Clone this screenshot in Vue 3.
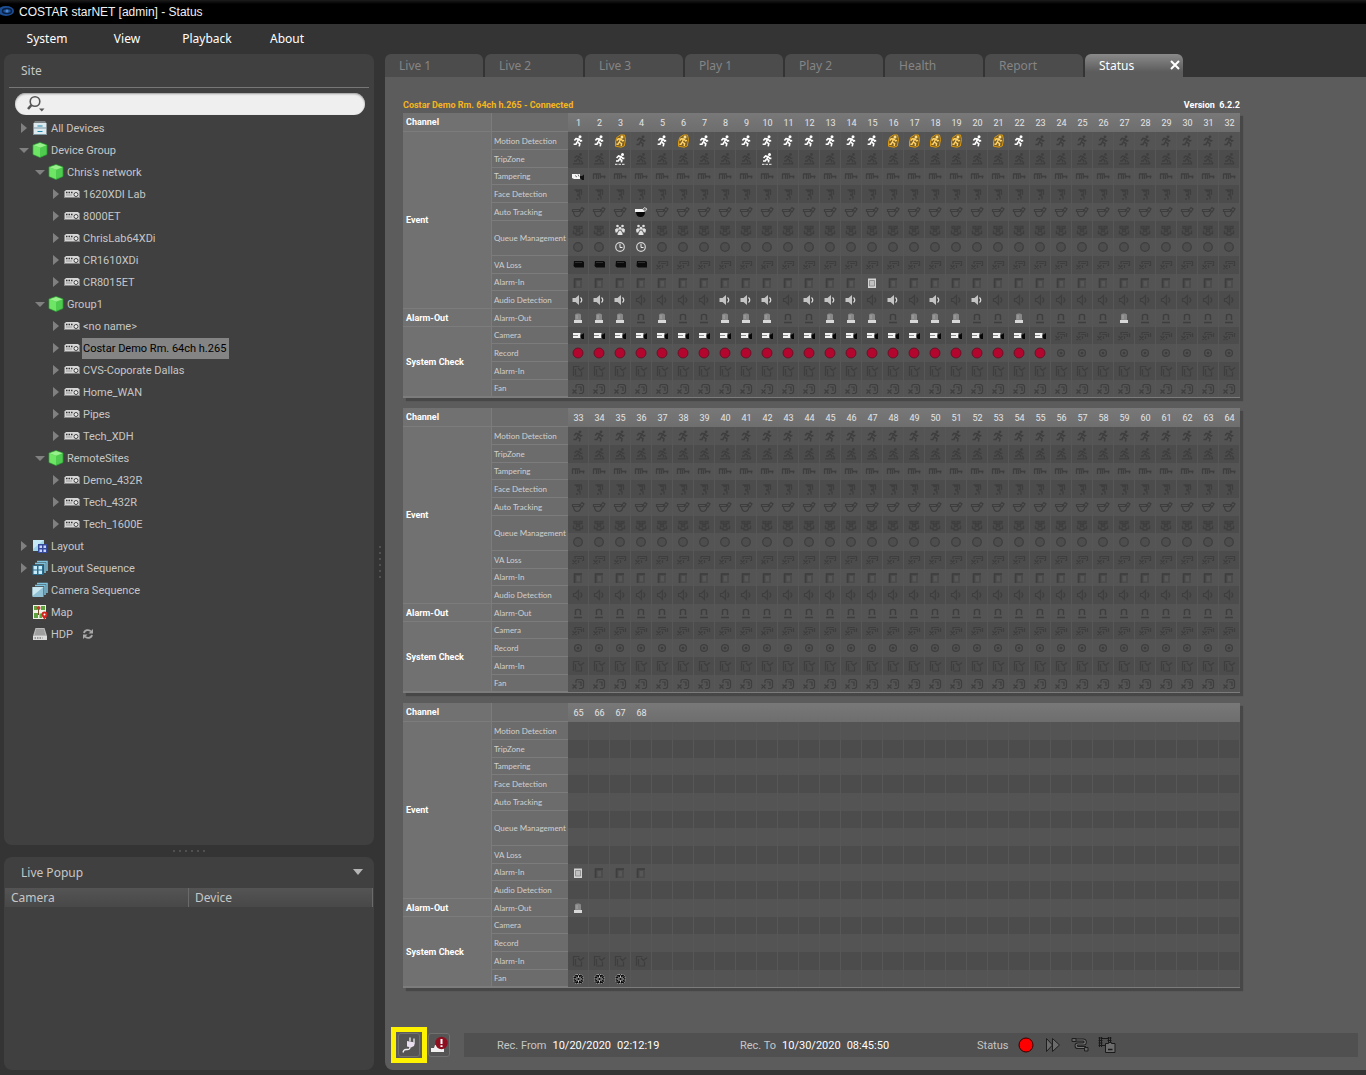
<template>
  <div class="app">
    <svg class="sprite" aria-hidden="true">
      <!-- dim symbols use currentColor, the "-on" ones bring their own colours -->
      <symbol id="motion" viewBox="0 0 14 14">
        <circle cx="9" cy="2.8" r="1.4" fill="currentColor" />
        <path d="M7.8 5 6.2 8M3.2 6.6 5 4.4 8 5l1.6 2 1.8-.6M6.2 8l2.8 1.6-.6 3M6 8.2l-1 2.2H2.4" fill="none" stroke="currentColor" stroke-width="1.5" />
      </symbol>
      <symbol id="motion-on" viewBox="0 0 14 14">
        <circle cx="9" cy="2.8" r="1.5" fill="#fff" />
        <path d="M7.8 5 6.2 8M3.4 6.6 5 4.6 8 5l1.6 2 1.6-.6M6.2 8l2.6 1.6-.6 2.8M6 8.2l-1 2H2.6" fill="none" stroke="#fff" stroke-width="1.6" />
      </symbol>
      <symbol id="motion-alert" viewBox="0 0 14 14">
        <path d="M7.5 1h4l1 4.500-1.200 6.500-3.300 1.200-5.500-1V8l1.200-4.500z" fill="#7d6129" stroke="#d9980f" stroke-width="1" />
        <circle cx="9" cy="3" r="1.500" fill="#ffe08a" />
        <path d="M7.800 5 6.200 8M3.800 6.600 5.200 4.800 8 5l1.600 2 1.400-.6M6.200 8l2.400 1.600-.4 2.400M6 8.200l-1 2H3.400" fill="none" stroke="#ffd368" stroke-width="1.400" />
      </symbol>
      <symbol id="trip" viewBox="0 0 14 14">
        <circle cx="9.500" cy="2.400" r="1.300" fill="currentColor" />
        <path d="M8 4.600 6.600 7M3.600 6l2-2 2.600.6 1.600 1.800h1.600M6.600 7l2.200 1.400-.4 2M6.400 7.200 5.200 9H3M2 11.800h10M10 8.500l2 3" fill="none" stroke="currentColor" stroke-width="1.300" />
      </symbol>
      <symbol id="trip-on" viewBox="0 0 14 14">
        <circle cx="9.500" cy="2.400" r="1.500" fill="#fff" />
        <path d="M8 4.600 6.600 7M3.600 6l2-2 2.600.6 1.600 1.800h1.600M6.600 7l2.200 1.400-.4 2M6.400 7.200 5.200 9H3" fill="none" stroke="#fff" stroke-width="1.600" />
        <path d="M2 12.300h10" stroke="#ccc" stroke-width="1.200" stroke-dasharray="2.500 1" />
      </symbol>
      <symbol id="tamper" viewBox="0 0 14 14">
        <path d="M1.500 4v5M4.500 4.500v4.500M6.500 5v4M8.500 5v3.500M1 4h8M8.500 6.500h5M12.500 5.500v3" fill="none" stroke="currentColor" stroke-width="1.300" />
      </symbol>
      <symbol id="tamper-on" viewBox="0 0 14 14">
        <path d="M1 4h8v5H3L1 8z" fill="#f4f4f4" />
        <path d="M4 5.500l2 1.500M7 4.500l1 2" stroke="#777" />
        <path d="M9 6h2l2-1.500V10h-2L9 8z" fill="#111" />
      </symbol>
      <symbol id="face" viewBox="0 0 14 14">
        <path d="M3.500 3h7.500M5 4.500h3.500v3H6M6 8l3 1.500v3M10.500 3v5M5 12h2" fill="none" stroke="currentColor" stroke-width="1.300" />
      </symbol>
      <symbol id="track" viewBox="0 0 14 14">
        <path d="M1.500 4.500h7v2h-7zM2.500 7c.3 3 1.500 4.500 3.500 4.500S9.500 10 10 7M9 5l2-2.500 2 1.500-2 3z" fill="none" stroke="currentColor" stroke-width="1.200" />
      </symbol>
      <symbol id="track-on" viewBox="0 0 14 14">
        <path d="M1 4h9v3H1z" fill="#f2f2f2" />
        <path d="M2 7h9c0 3-1.500 5-4.500 5S2 10 2 7z" fill="#080808" />
        <path d="M8.500 4.500 10.500 2.500l2.500 1.500-2 2.500z" fill="#777" stroke="#ddd" stroke-width=".8" />
      </symbol>
      <symbol id="queue" viewBox="0 0 14 14">
        <path d="M3 3.500h3v2H3zM8 3.500h3v2H8zM5.500 6.500h3v2h-3zM2.500 7.500v3h2.500M5 9.500v2.500h4V9.500M11.500 7.500v3H9.500" fill="none" stroke="currentColor" stroke-width="1.300" />
      </symbol>
      <symbol id="queue-on" viewBox="0 0 14 14">
        <g fill="#e0e0e0">
          <circle cx="4.500" cy="3" r="1.300" /><circle cx="9.500" cy="3" r="1.300" /><circle cx="7" cy="5.300" r="1.500" />
          <path d="M2 6.500 4 5l2 1.500-1.500 3h-2zM12 6.500 10 5 8 6.500l1.500 3h2z" />
          <path d="M4.500 12c0-3 1-4.500 2.500-4.500S9.500 9 9.500 12z" />
        </g>
        <path d="M4.500 10 5.500 7.500M9.500 10l-1-2.500" stroke="#555" stroke-width=".8" />
      </symbol>
      <symbol id="wait" viewBox="0 0 14 14">
        <circle cx="7" cy="7" r="4.300" fill="#4d4d4d" stroke="currentColor" stroke-width="1.200" />
      </symbol>
      <symbol id="wait-on" viewBox="0 0 14 14">
        <circle cx="7" cy="7" r="4.300" fill="#555" stroke="#d4d4d4" stroke-width="1.200" />
        <path d="M7 4v3.500h2.500" fill="none" stroke="#eee" />
      </symbol>
      <symbol id="va" viewBox="0 0 14 14">
        <path d="M4 6V3.500h8.500v4H11M6 5.500h5M1.500 7l4 4M5.500 7l-4 4M7.500 7v3" fill="none" stroke="currentColor" stroke-width="1.200" />
      </symbol>
      <symbol id="va-on" viewBox="0 0 14 14">
        <path d="M3 3h8.500l1.500 1v5.500H4L2.500 8z" fill="#0c0c0c" />
        <path d="M4 4.500h7" stroke="#383838" stroke-width=".8" />
      </symbol>
      <symbol id="input" viewBox="0 0 14 14">
        <path d="M3 2.500h8v9.500H3z" fill="#4b4b4b" />
        <path d="M3.500 12V3H11" fill="none" stroke="currentColor" stroke-width="1.600" />
        <path d="M5.500 5H9v5.500H5.500z" fill="#575757" />
      </symbol>
      <symbol id="input-on" viewBox="0 0 14 14">
        <path d="M3 2.500h8V12H3z" fill="#d4d4d4" />
        <path d="M4.500 4.500h5V10h-5z" fill="#c0c0c0" stroke="#858585" stroke-width=".8" />
      </symbol>
      <symbol id="audio" viewBox="0 0 14 14">
        <path d="M2.500 5.500h2l3-3v9l-3-3h-2zM9.500 4.500c1.500 1.500 1.500 3.500 0 5" fill="none" stroke="currentColor" stroke-width="1.200" />
      </symbol>
      <symbol id="audio-on" viewBox="0 0 14 14">
        <path d="M1.500 5h3L8 2v10L4.500 9h-3z" fill="#c4c4c4" />
        <path d="M9.500 4.500c1.700 1.500 1.700 3.500 0 5" fill="none" stroke="#ddd" stroke-width="1.200" />
      </symbol>
      <symbol id="output" viewBox="0 0 14 14">
        <path d="M4.500 9V4.500c0-1.500 5-1.500 5 0V9M3 11.500h8" fill="none" stroke="currentColor" stroke-width="1.400" />
      </symbol>
      <symbol id="output-on" viewBox="0 0 14 14">
        <path d="M4 9V4c0-2 6-2 6 0v5z" fill="#888" />
        <path d="M6 4v4" stroke="#a5a5a5" />
        <path d="M3 9h8v3H3z" fill="#d8d8d8" />
      </symbol>
      <symbol id="camera" viewBox="0 0 14 14">
        <path d="M4 6V3.500h7M6 5.500h4.500V8M12.500 4v4M1.500 7l4 4M5.500 7l-4 4M7.500 7v3" fill="none" stroke="currentColor" stroke-width="1.200" />
      </symbol>
      <symbol id="camera-on" viewBox="0 0 14 14">
        <path d="M2 4h7.500v5H2z" fill="#f2f2f2" />
        <path d="M2 6.500h5" stroke="#8c8c8c" />
        <path d="M9.500 5.500H11L13 4v6h-2L9.500 8.500z" fill="#060606" />
      </symbol>
      <symbol id="record" viewBox="0 0 14 14">
        <circle cx="7" cy="7" r="3.400" fill="none" stroke="currentColor" stroke-width="1.300" />
        <circle cx="7" cy="7" r="1.500" fill="currentColor" />
      </symbol>
      <symbol id="record-on" viewBox="0 0 14 14">
        <circle cx="7" cy="7" r="5" fill="#b3062f" stroke="#5c1022" stroke-width=".8" />
      </symbol>
      <symbol id="check" viewBox="0 0 14 14">
        <path d="M8.500 2.500h-6v9.500M4.500 5v6M10.500 7.500V12H4M7 4l2.500 2.500L13 3.500" fill="none" stroke="currentColor" stroke-width="1.200" />
      </symbol>
      <symbol id="fan" viewBox="0 0 14 14">
        <path d="M5 6V3.500l1-1h5l1.500 1.500v6L11 11.500H8M7 5h3v4M1.500 7.500l4 4M5.500 7.500l-4 4" fill="none" stroke="currentColor" stroke-width="1.200" />
      </symbol>
      <symbol id="fan-on" viewBox="0 0 14 14">
        <rect x="3" y="2.500" width="9" height="9" rx="2.500" fill="#0c0c0c" stroke="#bbb" stroke-width=".8" stroke-dasharray="1.500 1" />
        <path d="M7.500 7 5 4.500M7.500 7 10 4.500M7.500 7l2.500 2.500M7.500 7 5 9.500M7.500 3.500v7M4 7h7" stroke="#ddd" stroke-width=".9" />
        <circle cx="7.500" cy="7" r="1.200" fill="#111" />
      </symbol>

      <symbol id="tree-drawer" viewBox="0 0 16 16">
        <path d="M3 1h10l1.500 2h-13z" fill="#7d8385" />
        <path d="M1.500 3h13v12h-13z" fill="#dceaf0" />
        <path d="M1.500 8h13M1.500 14.500h13" stroke="#7d97a3" />
        <path d="M5.500 6h5M5.500 11.500h5" stroke="#1d87a8" stroke-width="1.200" />
      </symbol>
      <symbol id="tree-cube" viewBox="0 0 16 16">
        <path d="m8 .5 7 2.500v9.500l-7 3-7-3V3z" fill="#4fcb4f" stroke="#2c9c33" stroke-width=".8" />
        <path d="m8 1 6.500 2.200L8 5.800 1.500 3.200z" fill="#98f08c" />
        <path d="M8 5.800v9.200l-6.500-2.800v-9z" fill="#6ee565" />
      </symbol>
      <symbol id="tree-device" viewBox="0 0 16 16">
        <path d="M2 4h12l1.500 1.500V12H.5V5.500z" fill="#d6d6d6" />
        <path d="M.5 11.500h15" stroke="#888" />
        <path d="M2 6.500h7" stroke="#333" stroke-width="1.300" stroke-dasharray="1.500 1" />
        <path d="M2 9h6" stroke="#999" />
        <circle cx="12" cy="8.500" r="2" fill="#eee" stroke="#444" />
      </symbol>
      <symbol id="tree-layout" viewBox="0 0 16 16">
        <path d="M1 2h11v11H1z" fill="#9fd3ea" />
        <path d="M1 2h11L1 11z" fill="#c5e9f7" />
        <path d="M6 6h9v9H6z" fill="#35499a" />
        <path d="M7.500 7.500H10V10H7.500zM11.500 7.500H14V10h-2.500zM7.500 11.500H10V14H7.500zM11.500 11.500H14V14h-2.500z" fill="#c7d3ff" />
      </symbol>
      <symbol id="tree-layout-seq" viewBox="0 0 16 16">
        <path d="M5 1.500h10V11M3 3.500h10V13" fill="none" stroke="#7fc4df" stroke-width="1.500" />
        <path d="M.5 5h11v10H.5z" fill="#2c6a8a" />
        <path d="M1.500 6H5v3.500H1.500zM6.500 6H10v3.500H6.500zM1.500 10.500H5V14H1.500zM6.500 10.500H10V14H6.500z" fill="#c4ecfb" />
      </symbol>
      <symbol id="tree-camera-seq" viewBox="0 0 16 16">
        <path d="M5 1.500h10V11M3 3.500h10V13" fill="none" stroke="#7fc4df" stroke-width="1.500" />
        <path d="M.5 5h11v10H.5z" fill="#8fc0d3" />
        <path d="M.5 5h11L.5 14z" fill="#c9e8f2" />
      </symbol>
      <symbol id="tree-map" viewBox="0 0 16 16">
        <path d="M1 1h13v14H1z" fill="#eef3e6" />
        <path d="M2 2h3v4H2zM9 2h4v4H9zM2 9h4v5H2zM7.500 9.500H10V14H7.500z" fill="#5da33e" />
        <circle cx="6.500" cy="4" r="2" fill="#c23a2e" />
        <path d="M6.500 5v6" stroke="#7b4a2a" />
        <path d="M12.500 15.500C10.500 13 9.500 12 9.500 10.500a3 3 0 0 1 6 0c0 1.500-1 2.500-3 5z" fill="#d2231f" />
        <circle cx="12.500" cy="10.500" r="1" fill="#fff" />
      </symbol>
      <symbol id="tree-hdp" viewBox="0 0 16 16">
        <path d="M3.500 2h9L15 10H1z" fill="#b9b9b9" />
        <path d="M4 4h8M3.500 6h9M3 8h10" stroke="#858585" />
        <path d="M1 10h14v4H1z" fill="#dcdcdc" />
        <path d="M2.500 12h8" stroke="#555" stroke-dasharray="1.500 1" />
      </symbol>
    </svg>

    <header class="titlebar">
      <svg class="logo" viewBox="0 0 16 12">
        <ellipse cx="6" cy="6" rx="8" ry="5" fill="#1c4f94" />
        <ellipse cx="7" cy="6" rx="4.500" ry="2.500" fill="none" stroke="#0a1f40" stroke-width="1.500" />
        <circle cx="7" cy="6" r="1.500" fill="#4a86cc" />
      </svg>
      <h1>COSTAR starNET [admin] - Status</h1>
    </header>

    <nav class="menu">
      <button v-for="item in menu" :key="item" type="button">{{ item }}</button>
    </nav>

    <div class="body">
      <aside class="sidebar">
        <section class="panel site">
          <h2>Site</h2>
          <label class="search">
            <svg viewBox="0 0 20 18">
              <circle cx="10" cy="6.500" r="4.800" fill="none" stroke="#555" stroke-width="1.600" />
              <path d="M6.500 10 3 14" stroke="#555" stroke-width="2.500" />
              <path d="M14 13.500h5.500L16.800 16.500z" fill="#555" />
            </svg>
            <input v-model="search" type="text" aria-label="Search site" />
          </label>
          <ul class="tree">
            <li v-for="node in tree" :key="node.label" :class="'level-' + node.level">
              <span class="arrow" :class="node.state"></span>
              <svg class="node-icon"><use :href="'#tree-' + node.icon" /></svg>
              <span class="node-label" :class="{ selected: node.selected }">{{ node.label }}</span>
              <svg v-if="node.icon === 'hdp'" class="refresh" viewBox="0 0 12 12">
                <path d="M2 5c.5-3 5-4 7-1.500M10 7c-.5 3-5 4-7 1.500" fill="none" stroke="#a8a8a8" stroke-width="1.800" />
                <path d="M11 1v4.500H6.500zM1 11V6.500h4.500z" fill="#a8a8a8" />
              </svg>
            </li>
          </ul>
        </section>

        <div class="grip"><i v-for="n in 6" :key="n"></i></div>

        <section class="panel popup">
          <h2>
            Live Popup
            <button type="button" class="collapse" aria-label="Collapse live popup"></button>
          </h2>
          <table class="popup-table">
            <thead>
              <tr>
                <th>Camera</th>
                <th>Device</th>
              </tr>
            </thead>
          </table>
        </section>
      </aside>

      <div class="grip vertical"><i v-for="n in 6" :key="n"></i></div>

      <main class="main">
        <div class="tabs">
          <div v-for="tab in tabs" :key="tab" class="tab" :class="{ active: tab === activeTab }">
            <button type="button" class="tab-name" @click="activeTab = tab">{{ tab }}</button>
            <button v-if="tab === activeTab" type="button" class="close" aria-label="Close tab">
              <svg viewBox="0 0 10 10"><path d="m1 1 8 8m0-8-8 8" stroke="#fff" stroke-width="2" /></svg>
            </button>
          </div>
        </div>

        <div class="content">
          <div class="boards">
            <div class="board-head">
              <span class="site-name">Costar Demo Rm. 64ch h.265 - Connected</span>
              <span class="version">Version&nbsp; 6.2.2</span>
            </div>
            <table v-for="board in boards" :key="board.first" class="board">
              <thead>
                <tr>
                  <th class="group">Channel</th>
                  <th class="name"></th>
                  <th v-for="n in 32" :key="n" class="channel">
                    {{ n <= board.count ? board.first + n - 1 : '' }}
                  </th>
                </tr>
              </thead>
              <tbody>
                <tr v-for="(row, rowIndex) in rows" :key="rowIndex">
                  <th v-if="row.group" class="group" :rowspan="row.groupSpan">{{ row.group }}</th>
                  <th v-if="row.label" class="name" :rowspan="row.span || 1">{{ row.label }}</th>
                  <td v-for="n in 32" :key="n">
                    <svg v-if="iconFor(board, row, n)"><use :href="'#' + iconFor(board, row, n)" /></svg>
                  </td>
                </tr>
              </tbody>
            </table>
          </div>

          <footer class="statusbar">
            <button type="button" class="tool highlighted" aria-label="Connection">
              <svg viewBox="0 0 18 18">
                <path d="M10 1.500v4M14 2.500v4" stroke="#eee" stroke-width="1.300" />
                <path d="M7 5 15 6.500l-1 3.500-3 1.500-4-1z" fill="#e9dff0" />
                <path d="M10 11c0 3-2 2.500-4 2.500-1.500 0-2.500.5-3 3" fill="none" stroke="#eee" stroke-width="1.300" />
              </svg>
            </button>
            <button type="button" class="tool" aria-label="Alarm">
              <svg viewBox="0 0 18 18">
                <path d="M1 12h13v4H1zM5 9h4v3H4z" fill="#f0f0f0" />
                <circle cx="11.500" cy="7" r="6.200" fill="#8e1020" />
                <path d="M11.500 3v5M11.500 9.200v1.800" stroke="#fff" stroke-width="2" />
              </svg>
            </button>
            <div class="info">
              <div class="rec">Rec. From <time>10/20/2020</time><time>02:12:19</time></div>
              <div class="rec">Rec. To <time>10/30/2020</time><time>08:45:50</time></div>
              <div class="states">
                <span>Status</span>
                <svg viewBox="0 0 18 18"><circle cx="9" cy="9" r="7" fill="#f00" stroke="#300" /></svg>
                <svg viewBox="0 0 18 18">
                  <path d="M2.500 2.500 8.500 9l-6 6.500zM8.500 2.500 15.500 9l-7 6.500z" fill="#6c6c6c" stroke="#1f1f1f" />
                </svg>
                <svg viewBox="0 0 18 18">
                  <path d="M3 4h9c3 0 3 4 0 4H7c-2.500 0-2.500 3.500 0 3.500h8" fill="none" stroke="#1f1f1f" stroke-width="3.200" />
                  <path d="M3 4h9c3 0 3 4 0 4H7c-2.500 0-2.500 3.500 0 3.500h8" fill="none" stroke="#777" stroke-width="1.200" />
                  <path d="M1 2.500h4v3H1zM13.500 11.500h3.500v3.500h-3.500z" fill="#666" stroke="#1f1f1f" />
                </svg>
                <svg viewBox="0 0 18 18">
                  <path d="M1.500 1v10M3.500 1v10M10.500 1v6M12.500 1v5M3.500 2.500h7M3.500 9.500h4" fill="none" stroke="#1a1a1a" />
                  <path d="M.5 2h4M.5 4.500h4M.5 7h4M.5 9.500h4M9.500 2h4M9.500 4.500h4" stroke="#1a1a1a" />
                  <path d="M7.500 7.500h3v-1h3v1h3.500v9H7.500z" fill="#6c6c6c" stroke="#1a1a1a" />
                  <path d="M10 13.500h4.500" stroke="#1a1a1a" stroke-width="1.500" />
                </svg>
              </div>
            </div>
          </footer>
        </div>
      </main>
    </div>
  </div>
</template>

<script setup>
import { ref } from 'vue';

const search = ref('');
const activeTab = ref('Status');

const menu = ['System', 'View', 'Playback', 'About'];
const tabs = ['Live 1', 'Live 2', 'Live 3', 'Play 1', 'Play 2', 'Health', 'Report', 'Status'];

const device = (label, selected = false) => ({ label, level: 2, icon: 'device', state: 'closed', selected });

const tree = [
  { label: 'All Devices', level: 0, icon: 'drawer', state: 'closed' },
  { label: 'Device Group', level: 0, icon: 'cube', state: 'open' },
  { label: "Chris's network", level: 1, icon: 'cube', state: 'open' },
  device('1620XDI Lab'),
  device('8000ET'),
  device('ChrisLab64XDi'),
  device('CR1610XDi'),
  device('CR8015ET'),
  { label: 'Group1', level: 1, icon: 'cube', state: 'open' },
  device('<no name>'),
  device('Costar Demo Rm. 64ch h.265', true),
  device('CVS-Coporate Dallas'),
  device('Home_WAN'),
  device('Pipes'),
  device('Tech_XDH'),
  { label: 'RemoteSites', level: 1, icon: 'cube', state: 'open' },
  device('Demo_432R'),
  device('Tech_432R'),
  device('Tech_1600E'),
  { label: 'Layout', level: 0, icon: 'layout', state: 'closed' },
  { label: 'Layout Sequence', level: 0, icon: 'layout-seq', state: 'closed' },
  { label: 'Camera Sequence', level: 0, icon: 'camera-seq', state: 'leaf' },
  { label: 'Map', level: 0, icon: 'map', state: 'leaf' },
  { label: 'HDP', level: 0, icon: 'hdp', state: 'leaf' }
];

const range = (from, to) => Array.from({ length: to - from + 1 }, (_, i) => from + i);

const boards = [
  { first: 1, count: 32 },
  { first: 33, count: 32 },
  { first: 65, count: 4 }
];

// on: channels with the lit icon, dim: channels past 64 that still show the unlit one
const rows = [
  {
    icon: 'motion', group: 'Event', groupSpan: 10, label: 'Motion Detection',
    on: [1, 2, 5, ...range(7, 15), 20, 22], alert: [3, 6, 16, 17, 18, 19, 21]
  },
  { icon: 'trip', label: 'TripZone', on: [3, 10] },
  { icon: 'tamper', label: 'Tampering', on: [1] },
  { icon: 'face', label: 'Face Detection', on: [] },
  { icon: 'track', label: 'Auto Tracking', on: [4] },
  { icon: 'queue', label: 'Queue Management', span: 2, on: [3, 4] },
  { icon: 'wait', on: [3, 4] },
  { icon: 'va', label: 'VA Loss', on: range(1, 4) },
  { icon: 'input', label: 'Alarm-In', on: [15, 65], dim: [66, 67, 68] },
  { icon: 'audio', label: 'Audio Detection', on: [1, 2, 3, 8, 9, 10, 12, 13, 14, 16, 18, 20] },
  {
    icon: 'output', group: 'Alarm-Out', groupSpan: 1, label: 'Alarm-Out',
    on: [1, 2, 3, 5, 8, 9, 10, 13, 14, 15, 17, 18, 19, 22, 27, 65]
  },
  { icon: 'camera', group: 'System Check', groupSpan: 4, label: 'Camera', on: range(1, 23) },
  { icon: 'record', label: 'Record', on: range(1, 23) },
  { icon: 'check', label: 'Alarm-In', on: [], dim: [65, 66, 67, 68] },
  { icon: 'fan', label: 'Fan', on: [65, 66, 67] }
];

const iconFor = (board, row, n) => {
  const channel = board.first + n - 1;
  if (row.alert && row.alert.includes(channel)) return row.icon + '-alert';
  if (row.on.includes(channel)) return row.icon + '-on';
  if (channel <= 64 || (row.dim && row.dim.includes(channel))) return row.icon;
  return '';
};
</script>

<style>
body {
  margin: 0;
  background: #343434;
}
</style>

<style scoped>
.app {
  display: flex;
  flex-direction: column;
  min-height: 100vh;
  background: #343434;
  color: #c6c6c6;
  font-family: "Noto Sans", "Open Sans", sans-serif;
  font-size: 12px;
}

.sprite {
  display: none;
}

h1, h2 {
  margin: 0;
  font-weight: normal;
}

button {
  padding: 0;
  border: none;
  background: none;
  color: inherit;
  font: inherit;
  cursor: pointer;
}

.titlebar {
  display: flex;
  align-items: center;
  gap: 3px;
  height: 24px;
  background: linear-gradient(#1c1c1c, #000 4px);
}

.logo {
  width: 16px;
  height: 12px;
  margin-bottom: 3px;
}

.titlebar h1 {
  color: #f0f0f0;
  font-family: "Liberation Sans", sans-serif;
  font-size: 12px;
}

.menu {
  display: flex;
  align-items: center;
  height: 28px;
  padding: 0 0 2px 7px;
  color: #fff;
}

.menu button {
  width: 80px;
}

.body {
  display: flex;
  flex: 1;
  padding-bottom: 5px;
}

.sidebar {
  display: flex;
  flex-direction: column;
  flex: 0 0 370px;
  padding-left: 4px;
}

.panel {
  border-radius: 8px;
  background: #404040;
}

.panel h2 {
  color: #c6c6c6;
  font-size: 12px;
}

.site {
  flex: 1;
}

.site h2 {
  margin: 0 5px;
  padding-left: 12px;
  border-bottom: 1px solid #777;
  line-height: 33px;
}

.search {
  display: flex;
  align-items: center;
  height: 22px;
  margin: 5px 9px 2px 11px;
  padding: 0 10px;
  border-radius: 11px;
  background: #efefef;
  box-shadow: inset 0 1px 2px #999;
}

.search svg {
  width: 20px;
  height: 18px;
}

.search input {
  flex: 1;
  min-width: 0;
  border: none;
  outline: none;
  background: none;
  font: inherit;
}

.tree {
  margin: 0;
  padding: 0;
  list-style: none;
  font-family: Roboto, "Noto Sans", sans-serif;
  font-size: 11px;
}

.tree li {
  display: flex;
  align-items: center;
  height: 22px;
}

.level-0 {
  padding-left: 14px;
}

.level-1 {
  padding-left: 30px;
}

.level-2 {
  padding-left: 46px;
}

.arrow {
  display: flex;
  justify-content: center;
  width: 12px;
  margin-right: 2px;
}

.arrow.closed::before {
  content: "";
  border-left: 6px solid #808080;
  border-top: 5px solid transparent;
  border-bottom: 5px solid transparent;
}

.arrow.open::before {
  content: "";
  border-top: 5px solid #808080;
  border-left: 5px solid transparent;
  border-right: 5px solid transparent;
}

.node-icon {
  width: 16px;
  height: 16px;
}

.node-label {
  margin-left: 2px;
  padding: 0 3px 0 1px;
  line-height: 21px;
  white-space: nowrap;
}

.node-label.selected {
  background: #848484;
  color: #000;
}

.refresh {
  width: 12px;
  height: 12px;
  margin-left: 6px;
}

.grip {
  display: flex;
  justify-content: center;
  align-items: center;
  gap: 4px;
  height: 12px;
}

.grip i {
  width: 2px;
  height: 2px;
  background: #505050;
}

.grip.vertical {
  flex-direction: column;
  width: 11px;
  height: auto;
}

.popup {
  height: 213px;
}

.popup h2 {
  display: flex;
  justify-content: space-between;
  align-items: center;
  height: 30px;
  padding: 0 11px 1px 17px;
}

.collapse {
  border-top: 6px solid #b5b5b5;
  border-left: 5px solid transparent;
  border-right: 5px solid transparent;
}

.popup-table {
  width: 100%;
  padding: 0 1px;
  border-spacing: 0;
  table-layout: fixed;
}

.popup-table th {
  height: 19px;
  padding: 0 6px;
  border-right: 1px solid #6a6a6a;
  background: linear-gradient(#545454, #484848);
  font-weight: normal;
  line-height: 19px;
  text-align: left;
}

.main {
  display: flex;
  flex: 1;
  flex-direction: column;
  min-width: 0;
}

.tabs {
  display: flex;
  gap: 2px;
}

.tab {
  display: flex;
  justify-content: space-between;
  width: 98px;
  height: 23px;
  border-radius: 6px 6px 0 0;
  background: #4c4c4c;
  color: #858585;
}

.tab.active {
  background: linear-gradient(#8a8a8a, #5c5c5c 18px);
  color: #fff;
}

.tab-name {
  flex: 1;
  padding-left: 14px;
  text-align: left;
}

.close {
  padding: 0 3px 2px 0;
}

.close svg {
  display: block;
  width: 10px;
  height: 10px;
}

.content {
  display: flex;
  flex: 1;
  flex-direction: column;
  justify-content: space-between;
  padding: 20px 8px 8px 18px;
  border-radius: 0 0 0 8px;
  background: #5c5c5c;
}

.boards {
  align-self: flex-start;
  font-family: Roboto, "Liberation Sans", sans-serif;
  font-size: 9px;
}

.board-head {
  display: flex;
  justify-content: space-between;
  font-weight: bold;
  line-height: 16px;
}

.site-name {
  color: #f5b51e;
}

.version {
  color: #fff;
}

.board {
  margin-bottom: 10px;
  border-bottom: 1px solid #7c7c7c;
  border-spacing: 0;
  background: #4e4e4e;
  box-shadow: 3px 3px 1px #474747;
  table-layout: fixed;
  width: 837px;
}

.board th, .board td {
  box-sizing: border-box;
  height: 18px;
  padding: 0;
  line-height: 16px;
}

.board tbody tr:nth-child(3n) td,
.board tbody tr:nth-child(3n) th {
  height: 17px;
}

.board thead th {
  height: 19px;
  background: linear-gradient(#787878, #6e6e6e);
}

.board .group {
  width: 88px;
  padding-left: 3px;
  border-bottom: 1px solid #7c7c7c;
  background: #717171;
  color: #fff;
  text-align: left;
}

.board .name {
  width: 77px;
  padding-left: 2px;
  border-left: 1px solid #7c7c7c;
  border-bottom: 1px solid #7c7c7c;
  background: #6c6c6c;
  color: #d0d0d0;
  font-family: Lato, "Liberation Sans", sans-serif;
  font-size: 8px;
  font-weight: normal;
  text-align: left;
  white-space: nowrap;
}

.board .channel {
  width: 21px;
  color: #e4e4e4;
  font-weight: normal;
  text-align: center;
}

.board td {
  border-right: 1px solid #575757;
  color: #3e3e3e;
}

.board tbody tr:nth-child(odd) td {
  background: #545454;
}

.board tbody tr:nth-child(even) td {
  background: #4c4c4c;
}

.board td svg {
  display: block;
  width: 14px;
  height: 14px;
  margin: 0 auto;
}

.statusbar {
  display: flex;
  align-items: center;
  height: 34px;
  margin-left: -5px;
  font-family: Roboto, "Noto Sans", sans-serif;
  font-size: 11px;
}

.tool {
  position: relative;
  box-sizing: border-box;
  width: 22px;
  height: 24px;
  margin-right: 8px;
  border: 1px solid #707070;
  border-radius: 3px;
  background: #555;
}

.tool svg {
  display: block;
  width: 18px;
  height: 18px;
  margin: 0 auto;
}

.tool.highlighted::after {
  content: "";
  position: absolute;
  inset: -7px -8px;
  border: 5px solid #fff200;
}

.info {
  display: grid;
  grid-template-columns: 243px 237px 1fr;
  align-items: center;
  flex: 1;
  height: 24px;
  margin-left: 6px;
  padding-left: 33px;
  background: #505050;
}

.rec {
  display: flex;
  gap: 6px;
  white-space: nowrap;
}

.rec time {
  color: #fff;
}

.states {
  display: flex;
  align-items: center;
  gap: 9px;
}

.states svg {
  width: 18px;
  height: 18px;
}
</style>
